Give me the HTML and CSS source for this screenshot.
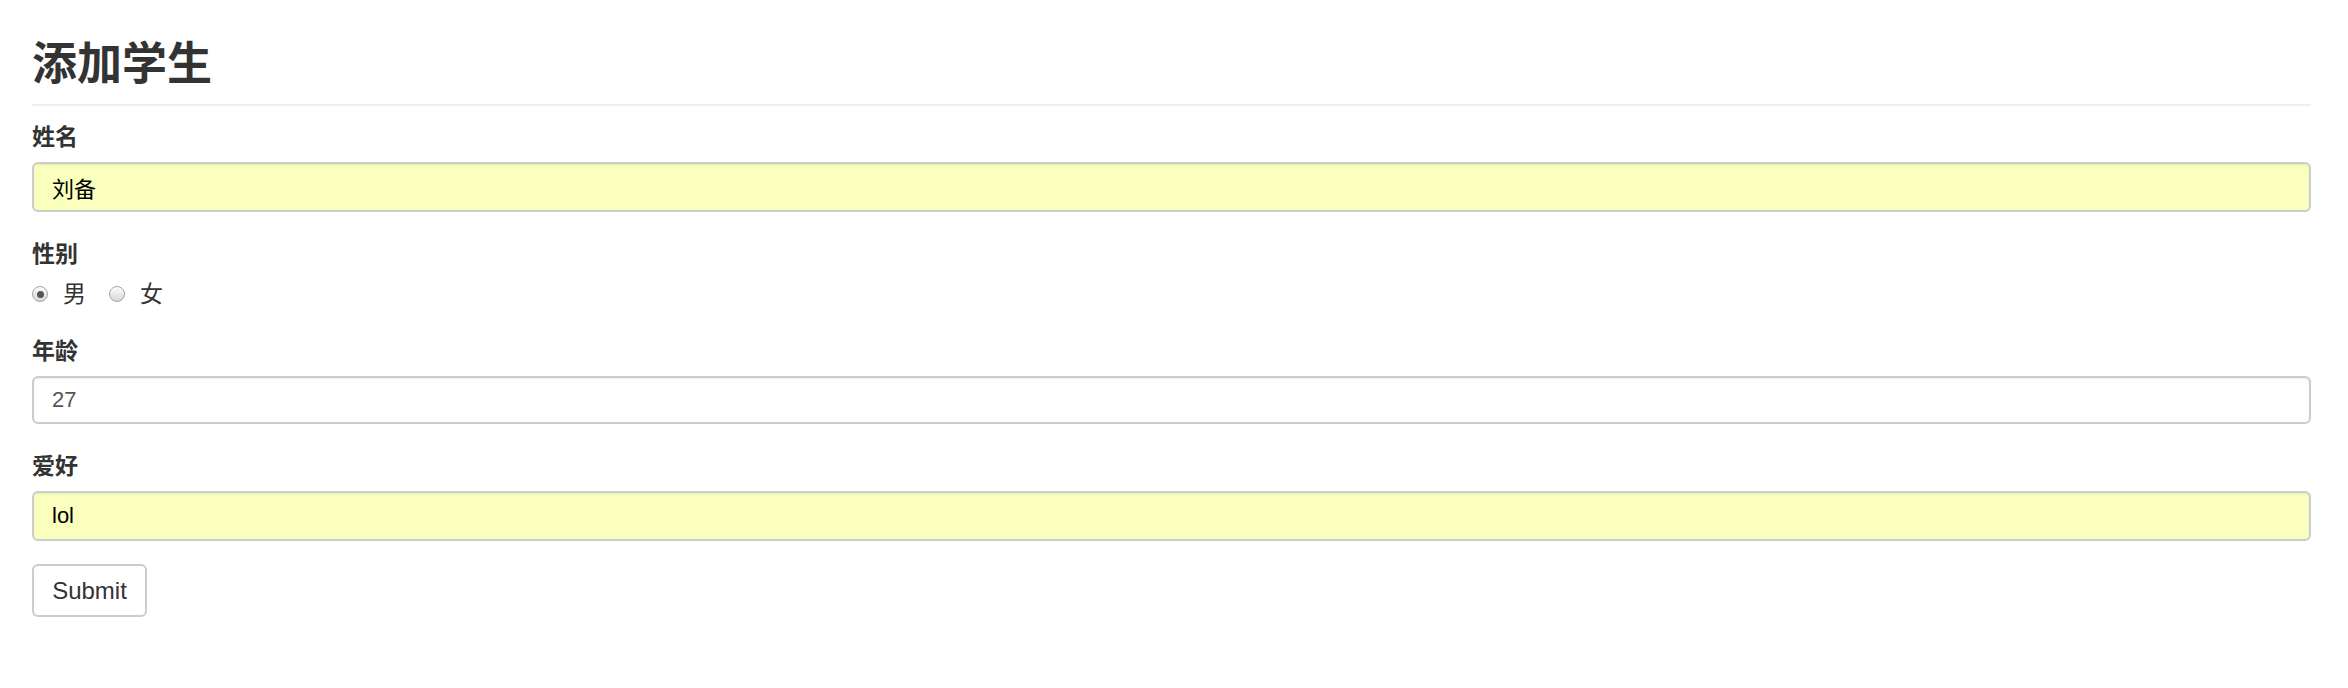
FILE: index.html
```html
<!DOCTYPE html>
<html lang="zh-CN">
<head>
<meta charset="utf-8">
<title>添加学生</title>
<link rel="stylesheet" href="styles.css">
</head>
<body>
<div class="page">
  <h1 class="page-title">添加学生</h1>
  <form class="form">
    <div class="form-group">
      <label class="label">姓名</label>
      <input class="control autofill" type="text" value="刘备">
    </div>
    <div class="form-group">
      <label class="label">性别</label>
      <div class="radios">
        <label class="radio-item"><input class="radio" type="radio" name="sex" checked><span>男</span></label>
        <label class="radio-item"><input class="radio" type="radio" name="sex"><span>女</span></label>
      </div>
    </div>
    <div class="form-group">
      <label class="label">年龄</label>
      <input class="control control-short" type="text" value="27">
    </div>
    <div class="form-group form-group-last">
      <label class="label">爱好</label>
      <input class="control autofill" type="text" value="lol">
    </div>
    <button class="btn" type="button">Submit</button>
  </form>
</div>
</body>
</html>
```

FILE: styles.css
```css
html, body {
  margin: 0;
  padding: 0;
  background: #fff;
}
body {
  font-family: "Liberation Sans", "Noto Sans CJK SC", sans-serif;
  color: #333;
  font-size: 23px;
}
.page {
  padding: 0 37px 0 32px;
}
.page-title {
  margin: 40px 0 0;
  font-size: 45px;
  line-height: 50px;
  font-weight: 700;
  color: #333;
  padding-bottom: 14px;
  border-bottom: 2px solid #eee;
}
.form {
  padding-top: 16px;
}
.form-group {
  margin-bottom: 27px;
}
.form-group-last {
  margin-bottom: 23px;
}
.label {
  display: block;
  font-weight: 700;
  line-height: 30px;
  margin-bottom: 10px;
}
.control {
  display: block;
  box-sizing: border-box;
  width: 100%;
  height: 50px;
  margin: 0;
  padding: 0 18px;
  border: 2px solid #ccc;
  border-radius: 6px;
  box-shadow: inset 0 1px 2px rgba(0,0,0,0.075);
  background: #fff;
  font-family: "Liberation Sans", "Noto Sans CJK SC", sans-serif;
  font-size: 22px;
  color: #555;
  outline: none;
}
.control-short {
  height: 48px;
}
.autofill {
  background: #faffbd;
  color: #000;
}
.radios {
  display: flex;
  align-items: center;
  height: 30px;
  gap: 23px;
}
.radio-item {
  display: flex;
  align-items: center;
  gap: 15px;
  line-height: 30px;
  font-size: 23px;
  color: #333;
}
.radio {
  appearance: none;
  -webkit-appearance: none;
  margin: 0;
  width: 16px;
  height: 16px;
  border-radius: 50%;
  border: 1px solid #a4a4a4;
  background: linear-gradient(#fdfdfd, #d8d8d8);
  box-sizing: border-box;
  position: relative;
}
.radio:checked::after {
  content: "";
  position: absolute;
  left: 3.5px;
  top: 3.5px;
  width: 7px;
  height: 7px;
  border-radius: 50%;
  background: #555;
}
.btn {
  display: block;
  box-sizing: border-box;
  height: 53px;
  width: 115px;
  padding: 0;
  border: 2px solid #ccc;
  border-radius: 6px;
  background: #fff;
  color: #333;
  font-family: "Liberation Sans", sans-serif;
  font-size: 24px;
}
```
